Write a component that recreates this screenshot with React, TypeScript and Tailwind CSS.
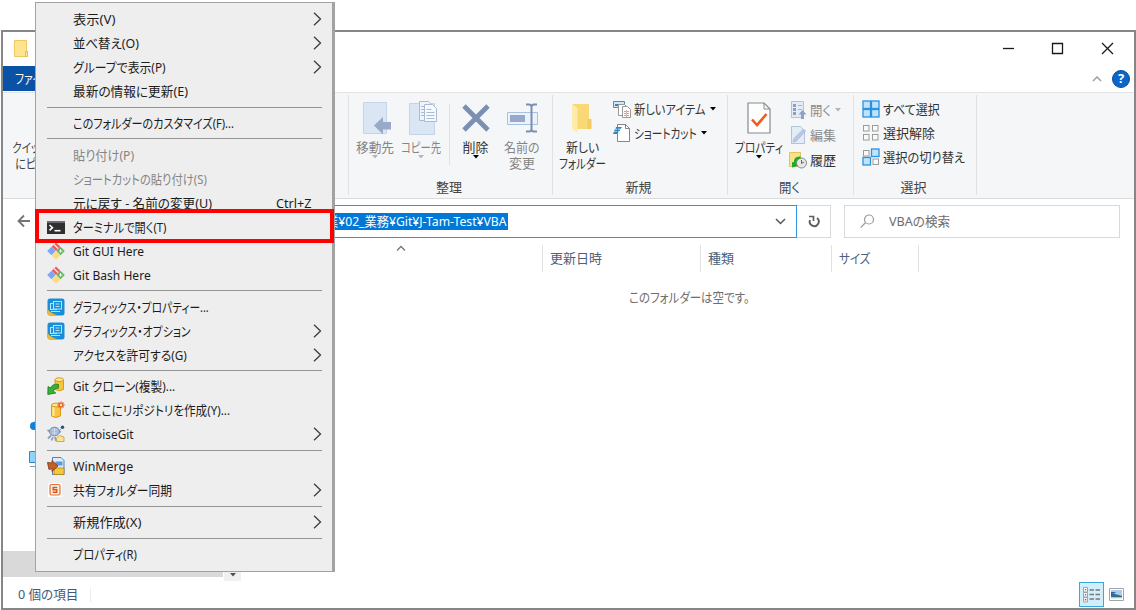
import { useLayoutEffect, useRef, useState } from 'react';
import type { ReactNode } from 'react';

interface FitProps {
    text: string;
    w: number;
    className?: string;
}

// Condensed label: squeezes the glyphs so the text takes exactly w pixels
const Fit = ({ text, w, className = '' }: FitProps) => {
    const ref = useRef<HTMLSpanElement>(null);
    const [scale, setScale] = useState(1);

    useLayoutEffect(() => {
        if (ref.current) setScale(w / ref.current.offsetWidth);
    }, [text, w]);

    return (
        <span className={`block shrink-0 whitespace-nowrap ${className}`} style={{ width: w }}>
            <span ref={ref} className="inline-block origin-left" style={{ transform: `scaleX(${scale})` }}>
                {text}
            </span>
        </span>
    );
};

/* ---------- small icons ---------- */

const Caret = ({ className = 'text-black' }: { className?: string }) => (
    <svg width="6" height="4" viewBox="0 0 6 4" className={`shrink-0 ${className}`}>
        <path d="M0 0h6L3 3.5z" fill="currentColor" />
    </svg>
);

const FolderIcon = () => (
    <svg width="16" height="20" viewBox="0 0 16 20">
        <path d="M1.5 1.5h12v11h1v5h-13z" fill="#ffe48f" stroke="#efc763" />
        <path d="M12.5 12.5h2v5h-2z" fill="#ffe9a6" stroke="#e9bd4e" />
    </svg>
);

const MoveToIcon = () => (
    <svg width="30" height="34" viewBox="0 0 30 34" className="ml-[6px]">
        <path d="M.5 1.500h23v31H.5z" fill="#dbe6f4" stroke="#c4d5ea" />
        <path d="M11 24.500l9-8.500v5h8v7.500h-8v5z" fill="#98aac8" />
    </svg>
);

const CopyToIcon = () => (
    <svg width="30" height="36" viewBox="0 0 30 36" className="ml-[6px]">
        <path d="M.5 3.500h25v31H.5z" fill="#dbe6f4" stroke="#c4d5ea" />
        <path d="M10.500 1.500h9l4 4v15h-13z" fill="#f0f5fb" stroke="#a9bbd5" />
        <path d="M15.500 4.500h8l4 4v13h-12z" fill="#f6f9fd" stroke="#a9bbd5" />
        <path d="M17.500 9.500h5M17.500 12.500h8M17.500 15.500h8M17.500 18.500h8M12 6.500h3M12 9.500h3M12 12.500h3M12 15.500h3" stroke="#a9bbd5" />
    </svg>
);

const DeleteIcon = () => (
    <svg width="28" height="28" viewBox="0 0 28 28">
        <path d="M2 2l24 24M26 2L2 26" stroke="#7b8fb3" strokeWidth="4.800" />
    </svg>
);

const RenameIcon = () => (
    <svg width="32" height="30" viewBox="0 0 32 30" className="ml-[2px]">
        <path d="M.5 9.500h30v12H.5z" fill="#eaf2fb" stroke="#a9c0df" />
        <path d="M3 12h15v7H3z" fill="#97a8c9" />
        <path d="M19 1.500h3q2.500 0 2.500 2.500v22q0 2.500-2.500 2.500h-3M30 1.500h-3q-2.500 0-2.500 2.500M30 28.500h-3q-2.500 0-2.500-2.500" fill="none" stroke="#7b8fb3" strokeWidth="2" />
    </svg>
);

const NewFolderIcon = () => (
    <svg width="22" height="32" viewBox="0 0 22 32">
        <path d="M2 2h16v15h2v10H2z" fill="#f9d876" />
        <path d="M16.500 17h4v10h-4z" fill="#f3cb5f" />
        <path d="M1 2l5.500 4v25L1 27z" fill="#ffebaa" />
    </svg>
);

const NewItemIcon = () => (
    <svg width="18" height="18" viewBox="0 0 18 18">
        <path d="M.5 1.500h11v6H.5z" fill="#cfe9f7" stroke="#4a8fb5" />
        <path d="M2 4h4v2H2z" fill="#3d84ad" />
        <path d="M5.500 4.500h6l2 2v9h-8z" fill="#fff" stroke="#999" />
        <path d="M9.500 6.500h5l3 3v8h-8z" fill="#fff" stroke="#999" />
        <path d="M11 11.500h5M11 13.500h5M11 15.500h5" stroke="#8fb3d8" />
        <path d="M13.500 10v7" stroke="#e2b3a6" />
    </svg>
);

const ShortcutIcon = () => (
    <svg width="18" height="18" viewBox="0 0 18 18">
        <path d="M4.500.5h8l4 4v13h-12z" fill="#fff" stroke="#858585" />
        <path d="M12.500.5v4h4" fill="none" stroke="#858585" />
        <path d="M3 3h6l-1 1.700H2.500zM1.500 5.500h6L6.500 7h-5zM1 7.500h5L4 10H0z" fill="#2f87bd" />
    </svg>
);

const PropertiesIcon = () => (
    <svg width="24" height="32" viewBox="0 0 24 32">
        <path d="M1 1h16l6 6v24H1z" fill="#fdfdfd" stroke="#8a8a8a" strokeWidth="1.200" />
        <path d="M17 1v6h6" fill="none" stroke="#8a8a8a" />
        <path d="M5 17.500l5 5.500 9.500-11" fill="none" stroke="#f4591f" strokeWidth="2.600" />
    </svg>
);

const OpenIcon = () => (
    <svg width="18" height="18" viewBox="0 0 18 18">
        <path d="M2.500.5h12v16h-12z" fill="#e4ecf7" stroke="#b3c3dc" />
        <path d="M4 3h3v3H4zM4 7h3v3H4zM4 11h3v3H4z" fill="#8da0c2" />
        <path d="M9 4.500h4M9 8.500h4" stroke="#a4b5d0" />
        <path d="M13.500 9l4 4.500h-2.500V18h-3v-4.500H9.500z" fill="#8ea2c5" />
    </svg>
);

const EditIcon = () => (
    <svg width="18" height="18" viewBox="0 0 18 18">
        <path d="M2.500.5h9l4 4v13h-13z" fill="#e4ecf7" stroke="#b3c3dc" />
        <path d="M4 16l1-3.500 9.500-9.500 2 2L7.500 15z" fill="#b9cae5" stroke="#9fb3d3" strokeWidth=".7" />
    </svg>
);

const HistoryIcon = () => (
    <svg width="18" height="18" viewBox="0 0 18 18">
        <path d="M.5 1.500h11v14H.5z" fill="#fbe08a" stroke="#e5c35c" />
        <circle cx="12.500" cy="12" r="5" fill="#e7e7e7" stroke="#888" />
        <path d="M12.500 9v3.500l2.500-1.500" fill="none" stroke="#666" />
        <path d="M11.500 5.500C7 5 4.500 8 5 11.500L3 11v5.500l6-1.500-1.800-1.700C6.800 10 8.500 8 11.500 8z" fill="#1fa82b" />
    </svg>
);

const Tile = ({ x, y, on }: { x: number; y: number; on: boolean }) => (
    <rect x={x} y={y} width={on ? 7.5 : 5.5} height={on ? 7.5 : 5.5} fill={on ? '#bfe3fb' : '#fafafa'} stroke={on ? '#2a93e0' : '#9b9b9b'} strokeWidth={on ? 1.3 : 1} />
);

const SelectAllIcon = () => (
    <svg width="18" height="18" viewBox="0 0 18 18">
        <Tile x={1} y={1} on />
        <Tile x={9.5} y={1} on />
        <Tile x={1} y={9.5} on />
        <Tile x={9.5} y={9.5} on />
    </svg>
);

const SelectNoneIcon = () => (
    <svg width="18" height="18" viewBox="0 0 18 18">
        <Tile x={1.5} y={1.5} on={false} />
        <Tile x={10.5} y={1.5} on={false} />
        <Tile x={1.5} y={10.5} on={false} />
        <Tile x={10.5} y={10.5} on={false} />
    </svg>
);

const InvertIcon = () => (
    <svg width="18" height="18" viewBox="0 0 18 18">
        <Tile x={1.5} y={2.5} on={false} />
        <Tile x={9.5} y={1} on />
        <Tile x={1} y={9.5} on />
        <Tile x={11} y={11} on={false} />
    </svg>
);

/* ---------- context menu icons ---------- */

const TerminalIcon = () => (
    <svg width="18" height="18" viewBox="0 0 18 18">
        <path d="M0 3h18v13H0z" fill="#2f2f2f" />
        <path d="M0 3h18v2H0z" fill="#6a6a6a" />
        <path d="M2.500 7l3 2.700-3 2.700" fill="none" stroke="#fff" strokeWidth="1.600" />
        <path d="M7.500 12.700h6" stroke="#fff" strokeWidth="1.600" />
    </svg>
);

const GitIcon = () => (
    <svg width="18" height="18" viewBox="0 0 18 18">
        <path d="M9 .5l4.300 4.300L9 9 4.700 4.800z" fill="#f0595c" />
        <path d="M4.500 4.800L8.700 9l-4.200 4.300L.2 9z" fill="#7ba7f2" />
        <path d="M13.500 4.800L17.800 9l-4.300 4.300L9.300 9z" fill="#5fb95f" />
        <path d="M9 9.300l4.200 4.200L9 17.700l-4.200-4.200z" fill="#fbdc7c" />
        <path d="M7 2.500l4 4M12 9h3.500M13.500 7.200v3.500" stroke="#f4f0ee" strokeWidth="1.100" />
    </svg>
);

const GraphicsIcon = () => (
    <svg width="18" height="18" viewBox="0 0 18 18">
        <rect x=".5" y=".5" width="17" height="17" rx="2.500" fill="#168fd8" />
        <path d="M.5 11c3 4 7 6 12 6.500H3Q.5 17.500.5 15z" fill="#e9b93c" />
        <path d="M6.500 3.500h8v7.500h-8zM6.500 5.500h-3v6h6V11M4 13.500h9M8.500 6h4M8.500 8.500h4" fill="none" stroke="#b5e2fa" strokeWidth="1.100" />
    </svg>
);

const CloneIcon = () => (
    <svg width="18" height="18" viewBox="0 0 18 18">
        <path d="M8 2.500v10q4 2.500 8.500 0v-10z" fill="#f7c63d" stroke="#d99a1f" />
        <ellipse cx="12.300" cy="2.700" rx="4.300" ry="1.900" fill="#fde591" stroke="#d99a1f" />
        <path d="M11.500 7.500C7.500 6.500 4.500 8.500 3.500 11L1 9.500.8 17.500l8-1.500-2.500-2c.8-1.700 2.500-3 5-2.700z" fill="#35b233" stroke="#1b7a1f" strokeWidth=".8" />
    </svg>
);

const CreateRepoIcon = () => (
    <svg width="18" height="18" viewBox="0 0 18 18">
        <path d="M4.500 4v11q4 3 9 0V4z" fill="#f7c63d" stroke="#d99a1f" />
        <path d="M6.500 6v9" stroke="#fdeab0" strokeWidth="2" />
        <ellipse cx="9" cy="4" rx="4.500" ry="1.900" fill="#fde591" stroke="#d99a1f" />
        <path d="M14 .5v7M10.500 4h7M11.500 1.500l5 5M16.500 1.500l-5 5" stroke="#ef5a31" strokeWidth="1.300" />
        <circle cx="14" cy="4" r="1.200" fill="#fff0a0" />
    </svg>
);

const TortoiseIcon = () => (
    <svg width="18" height="18" viewBox="0 0 18 18">
        <path d="M3.500 7L.5 5M4 10.500l-3 3M11 6l3 1M6 12l-1.500 3.500M8 12l1 4" stroke="#8c9fbe" strokeWidth="1.800" />
        <ellipse cx="7.500" cy="6.500" rx="5" ry="4.300" fill="#a9bbdb" stroke="#6f87b0" />
        <path d="M5 5h5M5 8h5M7.500 3v7" stroke="#d5dff0" strokeWidth=".8" />
        <path d="M14.500 3.500l-2 2" stroke="#8c9fbe" />
        <circle cx="15.500" cy="2.300" r="1.700" fill="#284f86" />
        <path d="M9.500 13l3-2.500 4.500 1.500v4.500H9.500z" fill="#f8e49a" stroke="#c39a3a" strokeWidth=".8" />
    </svg>
);

const WinMergeIcon = () => (
    <svg width="18" height="18" viewBox="0 0 18 18">
        <path d="M5.500.5h8.500l3 3v14H5.500z" fill="#dcecfa" stroke="#4a83bf" />
        <path d="M8.500 4.500h7v4h-7z" fill="#5c9bd8" />
        <path d="M7 11h10v6.500H7z" fill="#f5c73b" stroke="#b88616" strokeWidth=".8" />
        <path d="M.5 5.500L5 6V3.500l6 5.500-6 5.500V11.500L2 12.500z" fill="#c0602f" stroke="#8a3f18" strokeWidth=".9" />
    </svg>
);

const SyncIcon = () => (
    <svg width="18" height="18" viewBox="0 0 18 18">
        <path d="M1 2h14v14H1z" fill="#fff" />
        <rect x="3" y="3.500" width="10" height="10.500" rx="1.500" fill="#fdeee4" stroke="#e2702f" strokeWidth="1.200" />
        <path d="M10.300 6.500H6.200v2.300h3.600v2.400H5.700" fill="none" stroke="#d9541e" strokeWidth="1.400" />
    </svg>
);

/* ---------- ribbon ---------- */

interface BigButtonProps {
    icon: ReactNode;
    lines: [string, number][];
    className: string;
    caret?: string;
    dim?: boolean;
}

const BigButton = ({ icon, lines, className, caret, dim }: BigButtonProps) => (
    <div className={`flex shrink-0 flex-col items-center pt-[6px] ${dim ? 'text-[#858585]' : 'text-[#333]'} ${className}`}>
        <div className="mb-[2px] flex h-[38px] items-center">{icon}</div>
        {lines.map(([text, w]) => (
            <Fit key={text} text={text} w={w} className="h-4" />
        ))}
        {caret && <Caret className={caret} />}
    </div>
);

interface SmallButtonProps {
    icon: ReactNode;
    text: string;
    w: number;
    caret?: string;
    dim?: boolean;
}

const SmallButton = ({ icon, text, w, caret, dim }: SmallButtonProps) => (
    <div className={`flex h-6 items-center gap-[3px] ${dim ? 'text-[#8a8a8a]' : 'text-[#333]'}`}>
        {icon}
        <Fit text={text} w={w} />
        {caret && <Caret className={`ml-px ${caret}`} />}
    </div>
);

const Group = ({ label, w, className, children }: { label: string; w: number; className: string; children: ReactNode }) => (
    <div className={`flex shrink-0 flex-col justify-between pb-[3px] ${className}`}>
        <div className="flex">{children}</div>
        <div className="flex justify-center pr-[3px] text-[#444]">
            <Fit text={label} w={w} />
        </div>
    </div>
);

const Divider = () => <div className="mt-[2px] h-[100px] w-px shrink-0 bg-[#dfe1e3]" />;

const Ribbon = () => (
    <div className="flex h-[106px] border-b border-[#dadbdc] bg-[#f5f6f7] text-[13px] leading-4">
        <div className="w-[345px] shrink-0 pt-[46px] pl-[9px] text-[#444]">
            <Fit text="クイック" w={37} />
            <Fit text="にピン" w={31} className="ml-[3px]" />
        </div>
        <Divider />
        <Group label="整理" w={26} className="w-[203px]">
            <BigButton className="ml-[2px] w-[47px]" icon={<MoveToIcon />} lines={[['移動先', 38]]} caret="text-[#b5b5b5]" dim />
            <BigButton className="w-[46px]" icon={<CopyToIcon />} lines={[['コピー先', 40]]} caret="text-[#b5b5b5]" dim />
            <div className="mt-[11px] ml-[5px] h-[61px] w-px shrink-0 bg-[#dfe1e3]" />
            <BigButton className="ml-[2px] w-[47px]" icon={<DeleteIcon />} lines={[['削除', 26]]} caret="text-black" />
            <BigButton className="w-[46px]" icon={<RenameIcon />} lines={[['名前の', 36], ['変更', 26]]} dim />
        </Group>
        <Divider />
        <Group label="新規" w={26} className="w-[174px]">
            <BigButton className="ml-[3px] w-[52px]" icon={<NewFolderIcon />} lines={[['新しい', 33], ['フォルダー', 47]]} />
            <div className="ml-[5px] pt-[4px]">
                <SmallButton icon={<NewItemIcon />} text="新しいアイテム" w={72} caret="text-black" />
                <SmallButton icon={<ShortcutIcon />} text="ショートカット" w={63} caret="text-black" />
            </div>
        </Group>
        <Divider />
        <Group label="開く" w={21} className="w-[125px]">
            <BigButton className="ml-[5px] w-[52px]" icon={<PropertiesIcon />} lines={[['プロパティ', 48]]} caret="text-black" />
            <div className="ml-[4px] flex flex-col gap-px pt-[5px]">
                <SmallButton icon={<OpenIcon />} text="開く" w={21} caret="text-[#b5b5b5]" dim />
                <SmallButton icon={<EditIcon />} text="編集" w={26} dim />
                <SmallButton icon={<HistoryIcon />} text="履歴" w={26} />
            </div>
        </Group>
        <Divider />
        <Group label="選択" w={26} className="w-[122px]">
            <div className="ml-[8px] pt-[4px]">
                <SmallButton icon={<SelectAllIcon />} text="すべて選択" w={57} />
                <SmallButton icon={<SelectNoneIcon />} text="選択解除" w={52} />
                <SmallButton icon={<InvertIcon />} text="選択の切り替え" w={82} />
            </div>
        </Group>
        <Divider />
    </div>
);

/* ---------- explorer window ---------- */

const TitleBar = () => (
    <div className="flex h-[34px] items-center justify-between pr-[20px] pl-[10px]">
        <FolderIcon />
        <svg width="112" height="14" viewBox="0 0 112 14" fill="none" stroke="#1a1a1a" strokeWidth="1.300">
            <path d="M1 6.500h11" />
            <path d="M50.500 1.500h10v10h-10z" />
            <path d="M100 1l11 11M111 1l-11 11" />
        </svg>
    </div>
);

const TabRow = () => (
    <div className="flex h-[27px] items-start justify-between border-b border-[#e1e3e6] pr-[4px]">
        <div className="h-[25px] w-[57px] bg-[#0a52a5] pl-[12px] text-[13px] leading-[25px] text-white">
            <Fit text="ファイル" w={37} />
        </div>
        <div className="flex h-[25px] items-center gap-[10px]">
            <svg width="10" height="6" viewBox="0 0 10 6">
                <path d="M1 5l4-4 4 4" fill="none" stroke="#a3a3a3" strokeWidth="1.600" />
            </svg>
            <div className="flex h-[18px] w-[18px] items-center justify-center rounded-full border border-[#0b4f96] bg-[#0a66c8] text-[13px] leading-none font-bold text-white">?</div>
        </div>
    </div>
);

const AddressBar = () => (
    <div className="flex h-[46px] items-start pt-[6px] text-[13px]">
        <div className="pt-[9px] pl-[14px]">
            <svg width="14" height="14" viewBox="0 0 14 14">
                <path d="M13 7H1.500M7 1.500L1.500 7 7 12.500" fill="none" stroke="#757575" strokeWidth="1.800" />
            </svg>
        </div>
        <div className="ml-[60px] flex h-[33px] w-[706px] items-center justify-end border border-[#3492dc] bg-white pr-[10px]">
            <div className="flex h-[17px] w-[190px] items-center justify-end overflow-hidden bg-[#0078d7] pr-px leading-[17px] text-white">
                <Fit text="業¥02_業務¥Git¥J-Tam-Test¥VBA" w={181} />
            </div>
            <svg width="11" height="7" viewBox="0 0 11 7" className="ml-[267px]">
                <path d="M1 1l4.500 4.500L10 1" fill="none" stroke="#555" strokeWidth="1.500" />
            </svg>
        </div>
        <div className="flex h-[33px] w-[34px] items-center justify-center border border-l-0 border-[#d9d9d9]">
            <svg width="12" height="13" viewBox="0 0 12 13">
                <path d="M9 3A4.500 4.500 0 1 1 2 5" fill="none" stroke="#5f5f5f" strokeWidth="1.900" />
                <path d="M1 1.500h4.500V6" fill="none" stroke="#5f5f5f" strokeWidth="1.700" />
            </svg>
        </div>
        <div className="ml-[13px] flex h-[33px] w-[276px] items-center gap-[14px] border border-[#d9d9d9] pl-[15px] text-[#6d6d6d]">
            <svg width="15" height="15" viewBox="0 0 15 15" fill="none" stroke="#9a9a9a" strokeWidth="1.200">
                <circle cx="9" cy="5.500" r="4.500" />
                <path d="M5.500 8.500L.8 13.700" />
            </svg>
            <Fit text="VBAの検索" w={61} />
        </div>
    </div>
);

const ColumnHeader = () => (
    <div className="flex h-[27px] text-[13px] leading-[27px] text-[#4c607a]">
        <div className="flex w-[539px] justify-end pr-[136px]">
            <svg width="10" height="6" viewBox="0 0 10 6">
                <path d="M1 5.500l4-4 4 4" fill="none" stroke="#777" strokeWidth="1.300" />
            </svg>
        </div>
        <div className="w-[158px] border-l border-[#e2e2e2] pl-[7px]">
            <Fit text="更新日時" w={52} />
        </div>
        <div className="w-[131px] border-l border-[#e2e2e2] pl-[7px]">
            <Fit text="種類" w={26} />
        </div>
        <div className="w-[88px] border-x border-[#e2e2e2] pl-[7px]">
            <Fit text="サイズ" w={31} />
        </div>
    </div>
);

const StatusBar = () => (
    <div className="flex h-[27px] items-center justify-between pr-[10px] pl-[15px] text-[13px] text-[#41597d]">
        <div className="flex items-center gap-[12px]">
            <Fit text="0 個の項目" w={60} />
            <div className="h-[14px] w-px bg-[#ededed]" />
        </div>
        <div className="flex items-center gap-[5px]">
            <div className="flex h-[25px] w-[25px] items-center justify-center border border-[#3aa7dc] bg-[#d3eefb]">
                <svg width="19" height="16" viewBox="0 0 19 16">
                    <path d="M1.500.5h4v4.500h-4zM1.500 5.500h4V10h-4zM1.500 10.500h4V15h-4z" fill="#fff" stroke="#999" strokeWidth=".9" />
                    <path d="M2.800 2.700h1.500" stroke="#555" />
                    <path d="M2.800 7.700h1.500" stroke="#3a86d8" strokeWidth="1.500" />
                    <path d="M2.800 12.700h1.500" stroke="#d83a3a" strokeWidth="1.500" />
                    <path d="M7.500 3h4.500M13.500 3H18M7.500 7.500h4.500M13.500 7.500H18M7.500 12h4.500M13.500 12H18" stroke="#777" strokeWidth="1.300" />
                </svg>
            </div>
            <svg width="15" height="13" viewBox="0 0 15 13">
                <path d="M.5.5h14v12H.5z" fill="#fff" stroke="#a5a5a5" />
                <path d="M2 2h11v9H2z" fill="#a7cdf0" />
                <path d="M2 5l4 1 7 2v1.500H2z" fill="#2d6e90" />
                <path d="M2 4h5l-2 1.500H2z" fill="#2f5fae" />
                <path d="M2 9.500h11V11H2z" fill="#e7f0e4" />
            </svg>
        </div>
    </div>
);

const ExplorerWindow = () => (
    <div className="flex h-[580px] w-[1135px] flex-col border-2 border-[#868686] bg-white">
        <TitleBar />
        <TabRow />
        <Ribbon />
        <AddressBar />
        <ColumnHeader />
        <div className="flex grow text-[13px]">
            {/* navigation pane, mostly hidden under the menu */}
            <div className="flex w-[238px] shrink-0 flex-col justify-between">
                <div className="flex flex-col pt-[147px] pl-[26px]">
                    <svg width="18" height="14" viewBox="0 0 18 14">
                        <path d="M5 11a4 4 0 0 1 0-8 5 5 0 0 1 8 1 3.500 3.500 0 0 1 1 7z" fill="#1180d8" />
                    </svg>
                    <svg width="18" height="18" viewBox="0 0 18 18" className="mt-[17px]">
                        <path d="M.5 1.500h16v11H.5z" fill="#8fd4f8" stroke="#3388b8" />
                        <path d="M1 16.500h15" stroke="#7a98ac" />
                    </svg>
                </div>
                <div className="flex items-end">
                    <div className="mb-[4px] h-[26px] w-[220px] bg-[#d9d9d9]" />
                    <div className="ml-[1px] flex h-[17px] w-[17px] items-center justify-center bg-[#f0f0f0] pt-[4px]">
                        <Caret className="text-[#505050]" />
                    </div>
                </div>
            </div>
            <div className="grow pt-[16px] pl-[388px] text-[#6d6d6d]">
                <Fit text="このフォルダーは空です。" w={121} />
            </div>
        </div>
        <StatusBar />
    </div>
);

/* ---------- context menu ---------- */

interface MenuEntry {
    text: string;
    w: number;
    icon?: ReactNode;
    sub?: boolean;
    shortcut?: string;
    disabled?: boolean;
}

const menu: MenuEntry[][] = [
    [
        { text: '表示(V)', w: 43, sub: true },
        { text: '並べ替え(O)', w: 66, sub: true },
        { text: 'グループで表示(P)', w: 93, sub: true },
        { text: '最新の情報に更新(E)', w: 115 },
    ],
    [{ text: 'このフォルダーのカスタマイズ(F)...', w: 161 }],
    [
        { text: '貼り付け(P)', w: 61, disabled: true },
        { text: 'ショートカットの貼り付け(S)', w: 134, disabled: true },
        { text: '元に戻す - 名前の変更(U)', w: 139, shortcut: 'Ctrl+Z' },
        { text: 'ターミナルで開く(T)', w: 93, icon: <TerminalIcon /> },
        { text: 'Git GUI Here', w: 71, icon: <GitIcon /> },
        { text: 'Git Bash Here', w: 78, icon: <GitIcon /> },
    ],
    [
        { text: 'グラフィックス・プロパティー...', w: 136, icon: <GraphicsIcon /> },
        { text: 'グラフィックス・オプション', w: 118, icon: <GraphicsIcon />, sub: true },
        { text: 'アクセスを許可する(G)', w: 114, sub: true },
    ],
    [
        { text: 'Git クローン(複製)...', w: 102, icon: <CloneIcon /> },
        { text: 'Git ここにリポジトリを作成(Y)...', w: 157, icon: <CreateRepoIcon /> },
        { text: 'TortoiseGit', w: 61, icon: <TortoiseIcon />, sub: true },
    ],
    [
        { text: 'WinMerge', w: 60, icon: <WinMergeIcon /> },
        { text: '共有フォルダー同期', w: 99, icon: <SyncIcon />, sub: true },
    ],
    [{ text: '新規作成(X)', w: 68, sub: true }],
    [{ text: 'プロパティ(R)', w: 64 }],
];

const MenuRow = ({ item }: { item: MenuEntry }) => (
    <div className={`flex h-[23.98px] items-center ${item.disabled ? 'text-[#858585]' : 'text-[#1c1c1c]'}`}>
        <div className="mr-[8px] flex w-[18px] justify-center">{item.icon}</div>
        <Fit text={item.text} w={item.w} />
        <div className="ml-auto flex items-center">
            {item.shortcut && <Fit text={item.shortcut} w={36} className="mr-[10px]" />}
            {item.sub && (
                <svg width="9" height="14" viewBox="0 0 9 14">
                    <path d="M1 .8L7.500 7 1 13.200" fill="none" stroke="#3c3c48" strokeWidth="1.300" />
                </svg>
            )}
        </div>
    </div>
);

const ContextMenu = () => (
    <div className="absolute top-[2px] left-[35px] z-10 h-[570px] w-[300px] border border-r-[3px] border-[#a2a2a2] bg-[#eee] pt-[4.2px] pr-[10px] pl-[11px] text-[13px] leading-5">
        {menu.map((section, i) => (
            <div key={i}>
                {i > 0 && (
                    <div className="flex h-[7.95px] items-center">
                        <div className="h-px w-full bg-[#949494]" />
                    </div>
                )}
                {section.map((item) => (
                    <MenuRow key={item.text} item={item} />
                ))}
            </div>
        ))}
    </div>
);

const App = () => (
    <div className="relative h-[610px] w-[1136px] overflow-hidden bg-white pt-[30px] pl-px font-['Noto_Sans','Noto_Sans_CJK_JP',sans-serif] [font-feature-settings:'palt']">
        <ExplorerWindow />
        <ContextMenu />
        {/* highlighted entry */}
        <div className="absolute top-[209px] left-[35px] z-20 h-[34px] w-[299px] border-4 border-[#fe0000]" />
    </div>
);

export default App;
